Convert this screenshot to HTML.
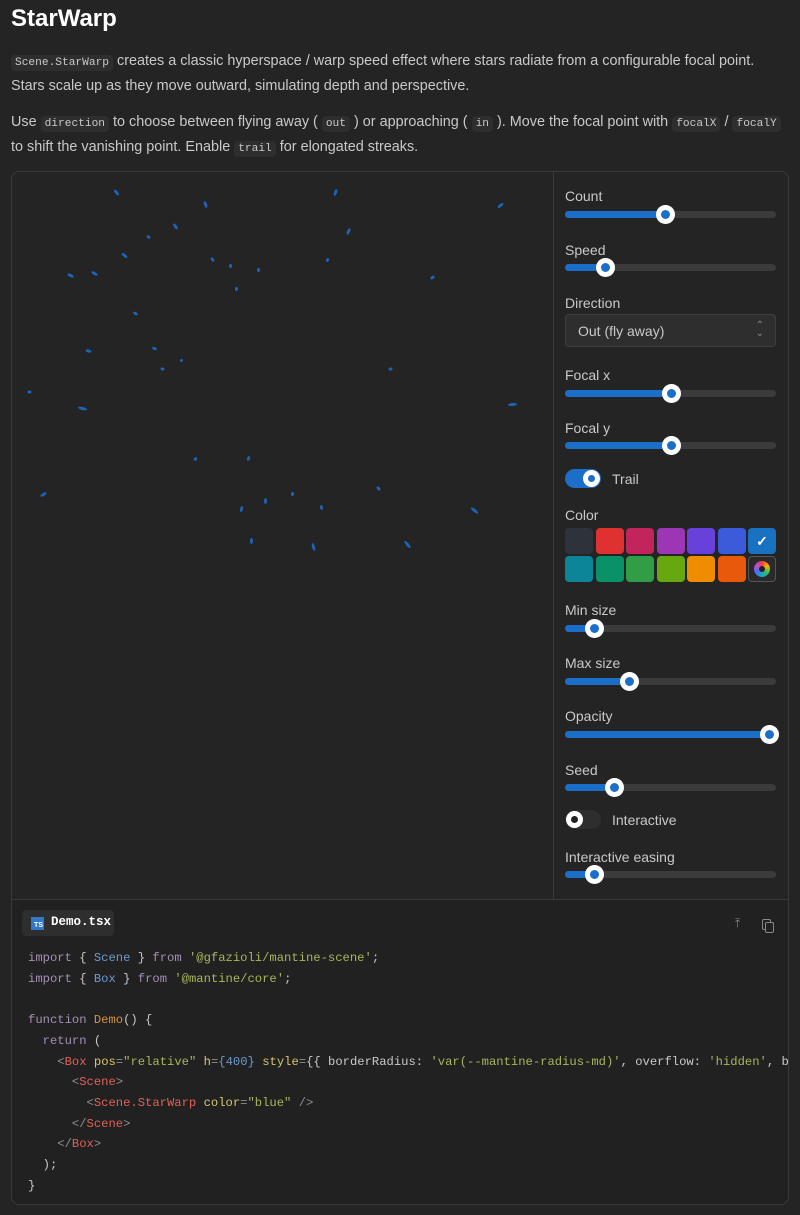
<!DOCTYPE html>
<html><head><meta charset="utf-8">
<style>
*{box-sizing:border-box;margin:0;padding:0}
body{width:800px;height:1215px;background:#242424;color:#c9c9c9;font-family:"Liberation Sans",sans-serif;position:relative;overflow:hidden}
.a{position:absolute}
h1{position:absolute;left:11px;top:5px;font-size:24px;font-weight:bold;color:#fff}
p{position:absolute;left:11px;font-size:14.4px;line-height:23px;color:#c9c9c9;white-space:nowrap}
code{font-family:"Liberation Mono",monospace;font-size:11.2px;background:#2e2e2e;padding:2px 4px;border-radius:4px;color:#c9c9c9}
.box{position:absolute;left:11px;top:171px;width:778px;height:1034px;border:1px solid #3a3a3a;border-radius:8px}
.lab{position:absolute;left:565px;font-size:14px;color:#c9c9c9}
.tr{position:absolute;left:565px;width:211px;height:7px;border-radius:4px;background:#3b3b3b}
.fi{position:absolute;left:0;top:0;height:7px;border-radius:4px;background:#1c6fc9}
.th{position:absolute;top:-6px;width:19px;height:19px;margin-left:-9.5px;border-radius:50%;background:#fff}
.th:after{content:"";position:absolute;left:5px;top:5px;width:9px;height:9px;border-radius:50%;background:#1c6fc9}
.sw{position:absolute;width:28px;height:26px;border-radius:4px}
.star{position:absolute;width:3px;height:7px;border-radius:50%;background:#1c64b8}
pre{position:absolute;left:28px;top:948px;font-family:"Liberation Mono",monospace;font-size:12.2px;line-height:20.7px;color:#c9c9c9;white-space:pre}
.k{color:#a48fb5}.b{color:#6b9bd1}.s{color:#a8b65a}.o{color:#d8913a}.t{color:#e06058}.y{color:#d9c46b}.g{color:#8f8f8f}
</style></head><body>
<h1>StarWarp</h1>
<p style="top:50px"><code>Scene.StarWarp</code> creates a classic hyperspace / warp speed effect where stars radiate from a configurable focal point.<br>Stars scale up as they move outward, simulating depth and perspective.</p>
<p style="top:111px">Use <code>direction</code> to choose between flying away ( <code>out</code> ) or approaching ( <code>in</code> ). Move the focal point with <code>focalX</code> / <code>focalY</code><br>to shift the vanishing point. Enable <code>trail</code> for elongated streaks.</p>
<div class="box"></div>
<div class="a" style="left:553px;top:172px;width:1px;height:727px;background:#3a3a3a"></div>
<div class="a" style="left:12px;top:899px;width:776px;height:1px;background:#3a3a3a"></div>
<div class="a" style="left:12px;top:900px;width:776px;height:304px;background:#212121;border-radius:0 0 8px 8px"></div>

<div class="star" style="left:115px;top:189px;transform:rotate(-40deg)"></div>
<div class="star" style="left:204px;top:201px;transform:rotate(-20deg)"></div>
<div class="star" style="left:334px;top:189px;transform:rotate(20deg)"></div>
<div class="star" style="left:499px;top:202px;transform:rotate(50deg)"></div>
<div class="star" style="left:174px;top:223px;transform:rotate(-35deg)"></div>
<div class="star" style="left:147px;top:235px;transform:rotate(-50deg);height:4px"></div>
<div class="star" style="left:347px;top:228px;transform:rotate(25deg)"></div>
<div class="star" style="left:123px;top:252px;transform:rotate(-50deg)"></div>
<div class="star" style="left:211px;top:257px;transform:rotate(-30deg);height:5px"></div>
<div class="star" style="left:326px;top:258px;transform:rotate(20deg);height:4px"></div>
<div class="star" style="left:69px;top:272px;transform:rotate(-65deg)"></div>
<div class="star" style="left:93px;top:270px;transform:rotate(-60deg)"></div>
<div class="star" style="left:431px;top:275px;transform:rotate(55deg);height:5px"></div>
<div class="star" style="left:229px;top:264px;height:4px"></div>
<div class="star" style="left:257px;top:268px;height:4px"></div>
<div class="star" style="left:134px;top:311px;transform:rotate(-60deg);height:5px"></div>
<div class="star" style="left:153px;top:346px;transform:rotate(-70deg);height:5px"></div>
<div class="star" style="left:87px;top:348px;transform:rotate(-75deg);height:6px"></div>
<div class="star" style="left:161px;top:367px;transform:rotate(-80deg);height:4px"></div>
<div class="star" style="left:389px;top:367px;transform:rotate(80deg);height:4px"></div>
<div class="star" style="left:28px;top:390px;transform:rotate(-85deg);height:4px"></div>
<div class="star" style="left:81px;top:404px;transform:rotate(-75deg);height:9px"></div>
<div class="star" style="left:511px;top:400px;transform:rotate(85deg);height:9px"></div>
<div class="star" style="left:247px;top:456px;height:5px;transform:rotate(20deg)"></div>
<div class="star" style="left:194px;top:457px;height:4px;transform:rotate(40deg)"></div>
<div class="star" style="left:42px;top:491px;transform:rotate(60deg)"></div>
<div class="star" style="left:377px;top:486px;transform:rotate(-40deg);height:5px"></div>
<div class="star" style="left:473px;top:506px;transform:rotate(-50deg);height:9px"></div>
<div class="star" style="left:264px;top:498px;height:6px"></div>
<div class="star" style="left:240px;top:506px;height:6px;transform:rotate(15deg)"></div>
<div class="star" style="left:320px;top:505px;height:5px;transform:rotate(-15deg)"></div>
<div class="star" style="left:250px;top:538px;height:6px"></div>
<div class="star" style="left:312px;top:543px;height:8px;transform:rotate(-15deg)"></div>
<div class="star" style="left:406px;top:540px;height:9px;transform:rotate(-40deg)"></div>
<div class="star" style="left:291px;top:492px;height:4px"></div>
<div class="star" style="left:235px;top:287px;height:4px"></div>
<div class="star" style="left:180px;top:359px;height:3px"></div>

<div class="lab" style="top:188px">Count</div>
<div class="tr" style="top:211px"><div class="fi" style="width:100px"></div><div class="th" style="left:100px"></div></div>
<div class="lab" style="top:242px">Speed</div>
<div class="tr" style="top:264px"><div class="fi" style="width:40px"></div><div class="th" style="left:40px"></div></div>
<div class="lab" style="top:295px">Direction</div>
<div class="a" style="left:565px;top:314px;width:211px;height:33px;border:1px solid #3e3e3e;border-radius:4px;background:#2e2e2e;font-size:14px;padding:8px 12px;color:#c9c9c9">Out (fly away)<span class="a" style="right:11px;top:7px;font-size:10px;color:#888;line-height:8px">&#8963;<br>&#8964;</span></div>
<div class="lab" style="top:367px">Focal x</div>
<div class="tr" style="top:390px"><div class="fi" style="width:106px"></div><div class="th" style="left:106px"></div></div>
<div class="lab" style="top:420px">Focal y</div>
<div class="tr" style="top:442px"><div class="fi" style="width:106px"></div><div class="th" style="left:106px"></div></div>
<div class="a" style="left:565px;top:469px;width:36px;height:19px;border-radius:10px;background:#1c6fc9"><div class="a" style="left:18px;top:1px;width:17px;height:17px;border-radius:50%;background:#fff"></div><div class="a" style="left:23px;top:6px;width:7px;height:7px;border-radius:50%;background:#1c6fc9"></div></div>
<div class="lab" style="left:612px;top:471px">Trail</div>
<div class="lab" style="top:507px">Color</div>
<div class="sw" style="left:565px;top:528px;background:#2e323a"></div>
<div class="sw" style="left:596px;top:528px;background:#e03131"></div>
<div class="sw" style="left:626px;top:528px;background:#c2255c"></div>
<div class="sw" style="left:657px;top:528px;background:#9c36b5"></div>
<div class="sw" style="left:687px;top:528px;background:#6741d9"></div>
<div class="sw" style="left:718px;top:528px;background:#3b5bdb"></div>
<div class="sw" style="left:748px;top:528px;background:#1971c2;color:#fff;text-align:center;font-size:14px;line-height:26px;font-weight:bold">✓</div>
<div class="sw" style="left:565px;top:556px;background:#0c8599"></div>
<div class="sw" style="left:596px;top:556px;background:#099268"></div>
<div class="sw" style="left:626px;top:556px;background:#2f9e44"></div>
<div class="sw" style="left:657px;top:556px;background:#66a80f"></div>
<div class="sw" style="left:687px;top:556px;background:#f08c00"></div>
<div class="sw" style="left:718px;top:556px;background:#e8590c"></div>
<div class="sw" style="left:748px;top:556px;background:#2a2a2a;border:1px solid #555"><div class="a" style="left:5px;top:4px;width:16px;height:16px;border-radius:50%;background:conic-gradient(#f03e3e,#fab005,#40c057,#15aabf,#4c6ef5,#be4bdb,#f03e3e)"></div><div class="a" style="left:10px;top:9px;width:6px;height:6px;border-radius:50%;background:#222"></div></div>
<div class="lab" style="top:602px">Min size</div>
<div class="tr" style="top:625px"><div class="fi" style="width:29px"></div><div class="th" style="left:29px"></div></div>
<div class="lab" style="top:655px">Max size</div>
<div class="tr" style="top:678px"><div class="fi" style="width:64px"></div><div class="th" style="left:64px"></div></div>
<div class="lab" style="top:708px">Opacity</div>
<div class="tr" style="top:731px"><div class="fi" style="width:204px"></div><div class="th" style="left:204px"></div></div>
<div class="lab" style="top:762px">Seed</div>
<div class="tr" style="top:784px"><div class="fi" style="width:49px"></div><div class="th" style="left:49px"></div></div>
<div class="a" style="left:565px;top:810px;width:36px;height:19px;border-radius:10px;background:#2e2e2e"><div class="a" style="left:1px;top:1px;width:17px;height:17px;border-radius:50%;background:#fff"></div><div class="a" style="left:6px;top:6px;width:7px;height:7px;border-radius:50%;background:#222"></div></div>
<div class="lab" style="left:612px;top:812px">Interactive</div>
<div class="lab" style="top:849px">Interactive easing</div>
<div class="tr" style="top:871px"><div class="fi" style="width:29px"></div><div class="th" style="left:29px"></div></div>

<div class="a" style="left:22px;top:910px;width:92px;height:26px;border-radius:4px;background:#2e2e2e"></div>
<div class="a" style="left:31px;top:917px;width:13px;height:13px;background:#3178c6;color:#fff;font-size:7px;font-weight:bold;line-height:17px;text-align:right;padding-right:1px">TS</div>
<div class="a" style="left:51px;top:915px;font-family:'Liberation Mono',monospace;font-size:12.5px;font-weight:bold;color:#fff">Demo.tsx</div>
<div class="a" style="left:735px;top:916px;color:#888;font-size:12px">⤒</div>
<div class="a" style="left:762px;top:919px;width:9px;height:11px;border:1.5px solid #888;border-radius:2px"></div>
<div class="a" style="left:765px;top:922px;width:9px;height:11px;border:1.5px solid #888;border-radius:2px;background:#212121"></div>
<pre><span class="k">import</span> { <span class="b">Scene</span> } <span class="k">from</span> <span class="s">'@gfazioli/mantine-scene'</span>;
<span class="k">import</span> { <span class="b">Box</span> } <span class="k">from</span> <span class="s">'@mantine/core'</span>;

<span class="k">function</span> <span class="o">Demo</span>() {
  <span class="k">return</span> (
    <span class="g">&lt;</span><span class="t">Box</span> <span class="y">pos</span><span class="g">=</span><span class="s">"relative"</span> <span class="y">h</span><span class="g">=</span><span class="b">{400}</span> <span class="y">style</span><span class="g">=</span>{{ borderRadius: <span class="s">'var(--mantine-radius-md)'</span>, overflow: <span class="s">'hidden'</span>, b
      <span class="g">&lt;</span><span class="t">Scene</span><span class="g">&gt;</span>
        <span class="g">&lt;</span><span class="t">Scene.StarWarp</span> <span class="y">color</span><span class="g">=</span><span class="s">"blue"</span> <span class="g">/&gt;</span>
      <span class="g">&lt;/</span><span class="t">Scene</span><span class="g">&gt;</span>
    <span class="g">&lt;/</span><span class="t">Box</span><span class="g">&gt;</span>
  );
}</pre>
</body></html>
